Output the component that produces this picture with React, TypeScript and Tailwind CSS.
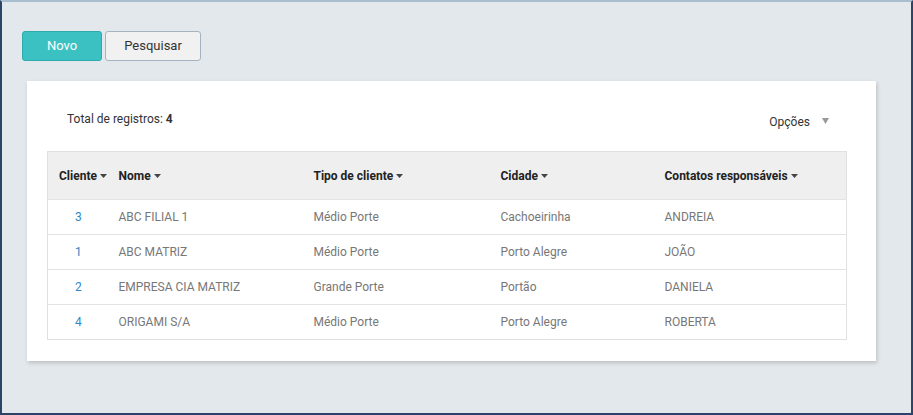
import React from "react";

const rows = [
  { id: 3, nome: "ABC FILIAL 1", tipo: "Médio Porte", cidade: "Cachoeirinha", contato: "ANDREIA" },
  { id: 1, nome: "ABC MATRIZ", tipo: "Médio Porte", cidade: "Porto Alegre", contato: "JOÃO" },
  { id: 2, nome: "EMPRESA CIA MATRIZ", tipo: "Grande Porte", cidade: "Portão", contato: "DANIELA" },
  { id: 4, nome: "ORIGAMI S/A", tipo: "Médio Porte", cidade: "Porto Alegre", contato: "ROBERTA" },
];

function Caret() {
  return (
    <svg width="7" height="4" viewBox="0 0 7 4" className="ml-[3px] inline-block fill-[#444]">
      <path d="M0 0h7L3.5 4z" />
    </svg>
  );
}

export default function App() {
  return (
    <div
      className="h-[415px] w-[913px] border-x-2 border-b-2 border-t-2 border-x-[#2b4468] border-b-[#2b4468] border-t-[#a9bfd0] bg-[#e3e8ec] px-[20px] pt-[29px] text-[12px] text-[#333]"
      style={{ fontFamily: "Roboto, 'Liberation Sans', sans-serif" }}
    >
      <div className="flex gap-[3px]">
        <button className="h-[30px] w-[80px] rounded-[3px] border border-[#2eaaac] bg-[#3cc1c3] text-[13px] text-white">
          Novo
        </button>
        <button className="h-[30px] w-[96px] rounded-[3px] border border-[#a6b4c1] bg-[#f1f1f1] text-[13px] text-[#333]">
          Pesquisar
        </button>
      </div>

      <div className="ml-[5px] mt-[20px] w-[849px] bg-white pb-[21px] pl-[20px] pr-[30px] shadow-[1px_2px_4px_rgba(0,0,0,0.18)]">
        <div className="flex h-[70px] items-start justify-between pt-[29px]">
          <div className="pl-[20px]">
            Total de registros: <span className="font-bold">4</span>
          </div>
          <div className="flex items-center pr-[17px] pt-[3px] text-[#333]">
            Opções
            <svg width="7" height="6" viewBox="0 0 7 6" className="ml-[12px] mb-[2px] fill-[#999]">
              <path d="M0 0h7L3.5 6z" />
            </svg>
          </div>
        </div>

        <table className="w-[799px] table-fixed border-collapse border border-[#e0e0e0]">
          <colgroup>
            <col className="w-[61px]" />
            <col className="w-[195px]" />
            <col className="w-[187px]" />
            <col className="w-[164px]" />
            <col className="w-[192px]" />
          </colgroup>
          <thead>
            <tr className="h-[48px] bg-[#efefef] text-left font-bold text-[#222]">
              <th className="pl-[11px] font-bold">
                Cliente<Caret />
              </th>
              <th className="pl-[10px] font-bold">
                Nome<Caret />
              </th>
              <th className="pl-[10px] font-bold">
                Tipo de cliente<Caret />
              </th>
              <th className="pl-[10px] font-bold">
                Cidade<Caret />
              </th>
              <th className="pl-[10px] font-bold">
                Contatos responsáveis<Caret />
              </th>
            </tr>
          </thead>
          <tbody>
            {rows.map((r) => (
              <tr key={r.id} className="h-[35px] border-t border-[#e3e3e3] text-[#777]">
                <td className="text-center text-[#2f86c4]">{r.id}</td>
                <td className="pl-[10px]">{r.nome}</td>
                <td className="pl-[10px]">{r.tipo}</td>
                <td className="pl-[10px]">{r.cidade}</td>
                <td className="pl-[10px]">{r.contato}</td>
              </tr>
            ))}
          </tbody>
        </table>
      </div>
    </div>
  );
}
